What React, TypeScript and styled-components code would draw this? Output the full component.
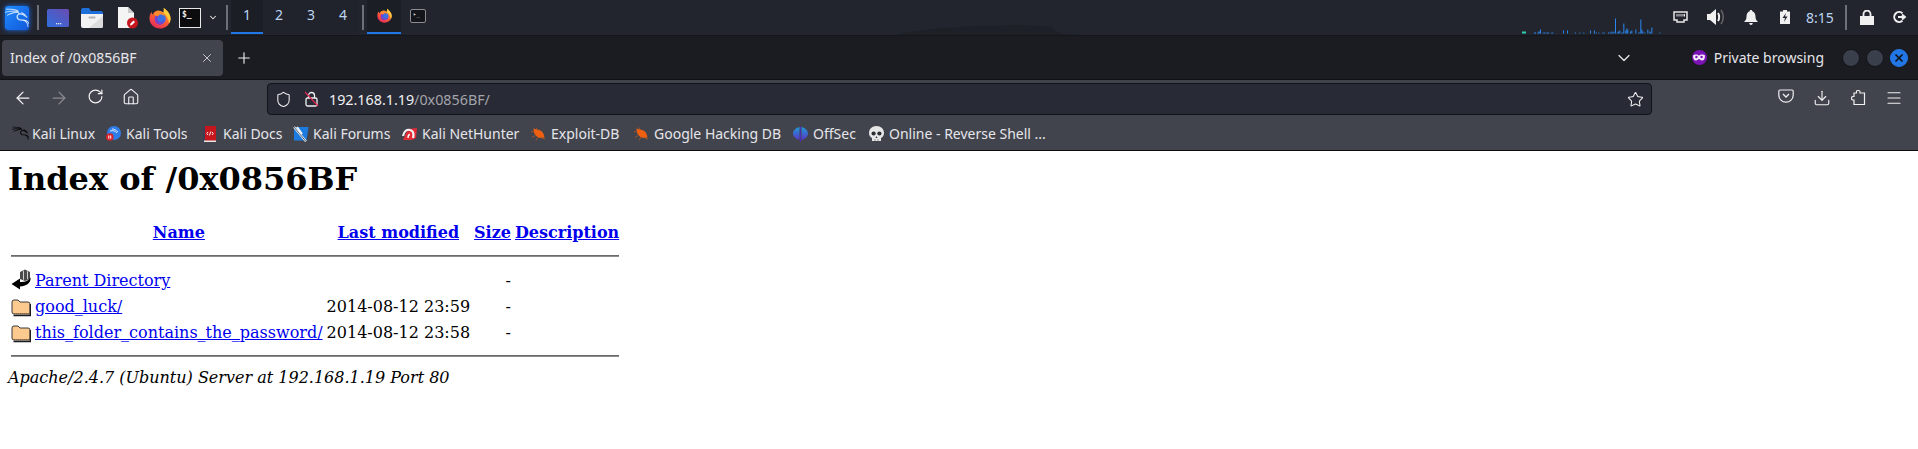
import React from "react";
import styled, { createGlobalStyle } from "styled-components";
import { SiKalilinux } from "react-icons/si";
import { ArrowLeft, ArrowRight, RotateCw, Home, Shield, Star, Download, Menu, X, Plus, ChevronDown } from "lucide-react";

const GlobalStyle = createGlobalStyle`
  html, body {
    margin: 0;
    padding: 0;
    background: #fff;
    overflow: hidden;
  }
  body {
    font-family: "DejaVu Serif", serif;
    font-size: 16px;
    color: #000;
  }
`;

const netBars: [number, number][] = [
  [102, 1], [105, 1], [112, 1], [115, 2], [118, 2], [120, 4], [128, 1], [132, 1], [137, 1], [141, 1], [145, 1], [154, 1], [157, 1],
  [189, 3], [201, 3], [225, 1], [238, 1], [250, 1], [270, 3], [282, 3], [287, 1], [295, 1], [307, 1], [311, 1], [324, 1], [328, 1],
  [332, 2], [336, 1], [340, 2], [345, 15], [350, 1], [354, 2], [358, 3], [364, 1], [367, 1], [370, 10], [376, 3], [379, 5], [382, 4],
  [390, 2], [394, 3], [406, 4], [415, 1], [418, 1], [421, 14], [424, 4], [427, 2], [433, 1], [442, 4], [448, 2], [451, 1], [454, 6], [478, 1],
];

const rows = [
  { icon: "back", name: "Parent Directory", date: "" },
  { icon: "folder", name: "good_luck/", date: "2014-08-12 23:59" },
  { icon: "folder", name: "this_folder_contains_the_password/", date: "2014-08-12 23:58" },
];

const FirefoxIcon = ({ size, id }: { size: number; id: string }) => (
  <svg width={size} height={size} viewBox="0 0 24 24">
    <defs>
      <linearGradient id={id + "a"} x1="0.8" y1="0" x2="0.2" y2="1">
        <stop offset="0" stopColor="#ffb52e" />
        <stop offset="0.55" stopColor="#ff5a36" />
        <stop offset="1" stopColor="#e0245e" />
      </linearGradient>
    </defs>
    <path d="M16 1c4 2.500 7.500 7 7.500 11.500C23.500 19 18 23.500 12 23.500 5.500 23.500 .5 18.500 .5 12.500c0-2.500.8-5 2.200-7 .2 1.300.7 2.200 1.500 2.900C5.500 5 8.500 3.500 11.500 4c2 .3 3.500 1.200 4.500 2.500.6-2 .6-3.800 0-5.500z" fill={`url(#${id}a)`} />
    <path d="M16 1c4 2.500 7.500 7 7.500 11.500 0 2-.5 3.700-1.400 5.300-1-5-3-9.500-6.600-11.300.6-2 .6-3.800.5-5.500z" fill="#ffcb3d" />
    <circle cx="12.300" cy="13" r="6" fill="#3b6fe4" />
    <path d="M6.300 13c0-2 1-3.800 2.500-4.900L12 10.200c-1.800.2-3 1.300-3 2.800 0 2 1.700 3.400 3.500 3.400 2 0 3.500-1 4.600-2.600-.6 3-2.900 5.200-5.300 5.200-3.300 0-5.500-2.700-5.500-6z" fill="#7b3fc9" />
    <path d="M5 7.500C7 4.800 10.500 4 13.200 5.400c2.300 1.100 3.500 3.300 3.600 5.100-1.400-1.800-3-2.400-5.300-2.200-.4 1-1.500 1.800-2.500 2-1.200-1-2.800-1.700-4-2.800z" fill="#ff8a2b" />
  </svg>
);

const DesktopIcon = () => (
  <svg width="22" height="18" viewBox="0 0 22 18">
    <defs>
      <linearGradient id="desk" x1="0" y1="1" x2="1" y2="0">
        <stop offset="0" stopColor="#2f6fdf" />
        <stop offset="1" stopColor="#6a4bb0" />
      </linearGradient>
    </defs>
    <rect width="22" height="18" rx="1.500" fill="url(#desk)" />
    <rect x="9" y="14" width="1.300" height="1.300" fill="#dfe6f5" />
    <rect x="11" y="14" width="1.300" height="1.300" fill="#dfe6f5" />
    <rect x="13" y="14" width="1.300" height="1.300" fill="#dfe6f5" />
  </svg>
);

const FolderIcon = () => (
  <svg width="22" height="20" viewBox="0 0 22 20">
    <path d="M0 2a2 2 0 0 1 2-2h6l2 3h10a2 2 0 0 1 2 2v2H0z" fill="#1f6fd8" />
    <path d="M0 6h22v12a2 2 0 0 1-2 2H2a2 2 0 0 1-2-2z" fill="#f2f2f2" />
    <path d="M22 8v10a2 2 0 0 1-2 2H8z" fill="#dcdcdc" />
    <rect x="7.500" y="8.500" width="7" height="2" rx="0.800" fill="#b5b5b5" />
  </svg>
);

const FileIcon = () => (
  <svg width="22" height="22" viewBox="0 0 22 22">
    <path d="M1 0h10l6 6v15H1z" fill="#f4f4f4" />
    <path d="M11 0l6 6h-6z" fill="#c9c9c9" />
    <circle cx="15.500" cy="16" r="5.500" fill="#c4161c" />
    <path d="M13 18.500l.5-2 3-3 1.500 1.500-3 3z" fill="#fff" />
  </svg>
);

const KaliMark = ({ size, color, weight }: { size: number; color: string; weight: number }) => (
  <SiKalilinux size={size} color={color} strokeWidth={weight} />
);

const ToolsFavicon = () => (
  <svg width="15" height="15" viewBox="0 0 15 15">
    <circle cx="8" cy="7" r="7" fill="#2f7de8" />
    <path d="M4 5c3-1 5 0 7 2M6 3c2 0 4 1 6 3" stroke="#dbe9ff" strokeWidth="1" fill="none" />
    <circle cx="3.800" cy="11" r="3.800" fill="#d8232a" />
    <rect x="2.300" y="9.500" width="1" height="3.200" fill="#fff" />
    <rect x="4.200" y="9.500" width="1" height="3.200" fill="#fff" />
  </svg>
);

const DocsFavicon = () => (
  <svg width="13" height="16" viewBox="0 0 13 16">
    <rect width="13" height="15" fill="#c4161c" />
    <rect width="2" height="16" fill="#3a3f55" />
    <rect x="1" y="14.500" width="12" height="1.500" fill="#e8e8e8" />
    <path d="M5 6L3.800 7.500 5 9M9 6l1.200 1.500L9 9M7.800 5.500L6.400 9.500" stroke="#fff" strokeWidth="0.900" fill="none" />
  </svg>
);

const ForumsFavicon = () => (
  <svg width="16" height="16" viewBox="0 0 16 16">
    <path d="M1 1h14.500l-2 13.500H1z" fill="#1d7be0" />
    <path d="M1 1l12 14.500M4 1l5 7" stroke="#eef4fb" strokeWidth="2" fill="none" />
    <path d="M1 1l12 14.500" stroke="#20242c" strokeWidth="0.700" fill="none" />
  </svg>
);

const HunterFavicon = () => (
  <svg width="16" height="15" viewBox="0 0 16 15">
    <path d="M1 14L6 3l9-1-1 10-4 2z" fill="#e02b35" />
    <path d="M1 10c1-5 4-7 7-6 3 .8 4 4 3 8" stroke="#f3f3f3" strokeWidth="2.200" fill="none" />
    <path d="M6 12c0-2 1-3.500 2-3.500" stroke="#f3f3f3" strokeWidth="1.500" fill="none" />
  </svg>
);

const BugFavicon = () => (
  <svg width="15" height="14" viewBox="0 0 15 14">
    <path d="M2.500 1.500l3.500 1c4 .2 7 3 7.500 8-4 1.200-8 0-9.700-3.300C2.800 5.500 2.500 3.500 2.500 1.500z" fill="#ee5f10" />
    <path d="M4 8.500L1 10.500M7 10l-2 3.500M10 10.500L14 12M2.500 5L0 4.500M6 2.500L5 .5" stroke="#a9552a" strokeWidth="0.900" />
  </svg>
);

const OffSecFavicon = () => (
  <svg width="15" height="16" viewBox="0 0 15 16">
    <defs>
      <linearGradient id="offsec" x1="0" y1="0" x2="0" y2="1">
        <stop offset="0" stopColor="#1f9ad6" />
        <stop offset="1" stopColor="#5a35c8" />
      </linearGradient>
    </defs>
    <path d="M6.500 1C2.500 2 0 4.500 0 7.500S2.500 13 6.500 14zM8.500 1c4 1 6.500 3.500 6.500 6.500S12.500 13 8.500 14z" fill="url(#offsec)" />
    <rect x="7" y="0" width="1" height="16" fill="#4a2fb5" />
  </svg>
);

const SkullFavicon = () => (
  <svg width="15" height="16" viewBox="0 0 15 16">
    <path d="M7.500 0C3 0 0 3 0 7c0 2.500 1.200 4 3 5v3h9v-3c1.800-1 3-2.500 3-5 0-4-3-7-7.500-7z" fill="#e6e6e6" />
    <circle cx="4.600" cy="7.500" r="2.100" fill="#2b2d33" />
    <circle cx="10.400" cy="7.500" r="2.100" fill="#2b2d33" />
    <path d="M7.500 10l-1 2h2z" fill="#2b2d33" />
    <path d="M6 13v2M9 13v2" stroke="#777" strokeWidth="0.700" />
  </svg>
);

const bookmarks = [
  { icon: <KaliMark size={17} color="#050505" weight={0.5} />, label: "Kali Linux", w: 94 },
  { icon: <ToolsFavicon />, label: "Kali Tools", w: 97 },
  { icon: <DocsFavicon />, label: "Kali Docs", w: 90 },
  { icon: <ForumsFavicon />, label: "Kali Forums", w: 109 },
  { icon: <HunterFavicon />, label: "Kali NetHunter", w: 129 },
  { icon: <BugFavicon />, label: "Exploit-DB", w: 103 },
  { icon: <BugFavicon />, label: "Google Hacking DB", w: 159 },
  { icon: <OffSecFavicon />, label: "OffSec", w: 76 },
  { icon: <SkullFavicon />, label: "Online - Reverse Shell ...", w: 190 },
];

export default function App() {
  return (
    <>
      <GlobalStyle />
      <Chrome>
        <TaskBar>
          <Slot $w={34}>
            <KaliButton>
              <KaliMark size={24} color="#eaf3ff" weight={0.4} />
            </KaliButton>
          </Slot>
          <Separator $left={3} />
          <Slot $w={38}><DesktopIcon /></Slot>
          <Slot $w={30}><FolderIcon /></Slot>
          <Slot $w={41}><FileIcon /></Slot>
          <Slot $w={24}><FirefoxIcon size={22} id="fa" /></Slot>
          <Slot $w={36}><TerminalBox>$_</TerminalBox></Slot>
          <Slot $w={10}><ChevronDown size={15} color="#e8e8e8" strokeWidth={2.500} /></Slot>
          <Separator $left={8} />
          <Spacer3 />
          {[1, 2, 3, 4].map((n) => (
            <Workspace key={n} $active={n === 1}>{n}</Workspace>
          ))}
          <Separator $left={3} />
          <Spacer3 />
          <TaskButton $active>
            <FirefoxIcon size={15} id="fb" />
          </TaskButton>
          <TaskButton>
            <TerminalTask>▸_</TerminalTask>
          </TaskButton>
          <Grow>
            <svg width="185" height="12" viewBox="0 0 185 12">
              <path d="M0 12C30 5 70 3 125 2c10 0 22 1 32 2 3 3 6 6 12 7l16 1z" fill="#1e2027" />
            </svg>
          </Grow>
          <NetGraph>
            <svg width="146" height="20" viewBox="0 0 146 20">
              <rect x="2" y="17.500" width="4" height="2" fill="#2fd0b0" />
              {netBars.map(([x, h]) => (
                <rect key={x} x={x / 3 - 20} y={19.500 - h} width="1" height={h} fill="#2a86f0" />
              ))}
            </svg>
          </NetGraph>
          <TrayIcon $w={28}>
            <svg width="15" height="13" viewBox="0 0 15 13">
              <path d="M1 1h13v8h-3v2H4V9H1z" fill="none" stroke="#e8e8e8" strokeWidth="1.500" />
              <path d="M4 3v2.500M6 3v2.500M8 3v2.500M10 3v2.500M11.500 3v2.500" stroke="#e8e8e8" strokeWidth="1" />
            </svg>
          </TrayIcon>
          <TrayIcon $w={44}>
            <svg width="18" height="16" viewBox="0 0 18 16">
              <path d="M0 5h3l6-5v16l-6-5H0z" fill="#f0f0f0" />
              <path d="M11 4c1.500 2 1.500 6 0 8" stroke="#f0f0f0" strokeWidth="2" fill="none" />
              <path d="M14 1c3 4 3 10 0 14" stroke="#666" strokeWidth="1.500" fill="none" />
            </svg>
          </TrayIcon>
          <TrayIcon $w={26}>
            <svg width="14" height="15" viewBox="0 0 14 15">
              <path d="M7 0c.8 0 1.300.5 1.300 1.200C10.500 2 11.500 4 11.500 6.500c0 2.500.7 3.800 2.500 5.500H0c1.800-1.700 2.500-3 2.500-5.500C2.500 4 3.500 2 5.700 1.200 5.700.5 6.200 0 7 0zM5.200 13h3.600C8.600 14.200 8 15 7 15s-1.600-.8-1.800-2z" fill="#f0f0f0" />
            </svg>
          </TrayIcon>
          <TrayIcon $w={42}>
            <svg width="10" height="14" viewBox="0 0 10 14">
              <path d="M3 0h4v1.500h3V14H0V1.500h3z" fill="#f0f0f0" />
              <path d="M6 3L2.500 8H5l-1 4 3.500-5.500H5z" fill="#22252e" />
            </svg>
          </TrayIcon>
          <Clock>8:15</Clock>
          <Separator $left={12} />
          <TrayIcon $w={40}>
            <svg width="14" height="15" viewBox="0 0 14 15">
              <path d="M0 6h14v9H0z" fill="#f0f0f0" />
              <path d="M3.500 6V4a3.500 3.500 0 0 1 7 0v2" stroke="#f0f0f0" strokeWidth="1.800" fill="none" />
            </svg>
          </TrayIcon>
          <TrayIcon $w={26}>
            <svg width="14" height="12" viewBox="0 0 14 12">
              <path d="M9.500 2.200A5 5 0 1 0 9.500 9.800" stroke="#f0f0f0" strokeWidth="2" fill="none" />
              <path d="M5 6h6M9 3.500L12 6 9 8.500" stroke="#f0f0f0" strokeWidth="1.800" fill="none" />
            </svg>
          </TrayIcon>
        </TaskBar>

        <TabStrip>
          <Tab>
            <TabTitle>Index of /0x0856BF</TabTitle>
            <X size={14} color="#d8d8dc" strokeWidth={1.500} />
          </Tab>
          <NewTab><Plus size={18} color="#f0f0f0" strokeWidth={1.500} /></NewTab>
          <TabSpacer />
          <ChevronDown size={20} color="#e6e6e6" strokeWidth={1.500} />
          <PrivateBadge>
            <PrivateIcon>
              <svg width="12" height="7" viewBox="0 0 12 7">
                <path d="M0 1.500C2-.3 4.500.5 6 1.500 7.500.5 10-.3 12 1.500c0 3-1 5-3 5-1.500 0-2-1.500-3-1.500s-1.500 1.500-3 1.500c-2 0-3-2-3-5z" fill="#f5ecff" />
                <circle cx="3.400" cy="3" r="1.200" fill="#7b12b5" />
                <circle cx="8.600" cy="3" r="1.200" fill="#7b12b5" />
              </svg>
            </PrivateIcon>
            Private browsing
          </PrivateBadge>
          <WindowButtons>
            <WindowDot />
            <WindowDot />
            <WindowDot $close><X size={12} color="#10131a" strokeWidth={3.500} /></WindowDot>
          </WindowButtons>
        </TabStrip>

        <NavBar>
          <NavButtons>
            <NavSlot><ArrowLeft size={20} color="#f3f3f5" strokeWidth={1.500} /></NavSlot>
            <NavSlot><ArrowRight size={20} color="#8a8b90" strokeWidth={1.500} /></NavSlot>
            <NavSlot><RotateCw size={17} color="#f3f3f5" strokeWidth={1.700} /></NavSlot>
            <NavSlot><Home size={18} color="#f3f3f5" strokeWidth={1.500} /></NavSlot>
          </NavButtons>
          <UrlBar>
            <Shield size={17} color="#f0f0f2" strokeWidth={1.500} />
            <LockSlot>
              <svg width="15" height="16" viewBox="0 0 15 16">
                <rect x="2" y="7" width="11" height="8" rx="1.500" fill="none" stroke="#f0f0f2" strokeWidth="1.300" />
                <path d="M4.500 7V4.500a3 3 0 0 1 6 0V7" fill="none" stroke="#f0f0f2" strokeWidth="1.300" />
                <path d="M1 1l13 14" stroke="#e22850" strokeWidth="1.200" />
              </svg>
            </LockSlot>
            <UrlText>192.168.1.19<UrlPath>/0x0856BF/</UrlPath></UrlText>
            <Star size={17} color="#f0f0f2" strokeWidth={1.500} />
          </UrlBar>
          <NavTools>
            <ToolSlot>
              <svg width="16" height="14" viewBox="0 0 16 14">
                <path d="M2 1h12a1.200 1.200 0 0 1 1.200 1.200V6A7.200 7.200 0 0 1 .8 6V2.200A1.200 1.200 0 0 1 2 1z" fill="none" stroke="#f0f0f2" strokeWidth="1.200" />
                <path d="M5 5l3 3 3-3" fill="none" stroke="#f0f0f2" strokeWidth="1.300" />
              </svg>
            </ToolSlot>
            <ToolSlot><Download size={18} color="#f0f0f2" strokeWidth={1.500} /></ToolSlot>
            <ToolSlot>
              <svg width="15" height="16" viewBox="0 0 15 16">
                <path d="M6 1.500h1.500c1 0 1.500.7 1.500 1.500v1h4.500v11.500H3V11H2c-1 0-1.500-.8-1.500-1.700S1 7.500 2 7.500h1V4h2.500V3c0-.8 0-1.500.5-1.500z" fill="none" stroke="#f0f0f2" strokeWidth="1.200" />
              </svg>
            </ToolSlot>
            <ToolSlot><Menu size={18} color="#f0f0f2" strokeWidth={1.500} /></ToolSlot>
          </NavTools>
        </NavBar>

        <BookmarkBar>
          {bookmarks.map((b) => (
            <Bookmark key={b.label} $w={b.w}>
              <BookmarkIcon>{b.icon}</BookmarkIcon>
              <span>{b.label}</span>
            </Bookmark>
          ))}
        </BookmarkBar>
      </Chrome>

      <Page>
        <Heading>Index of /0x0856BF</Heading>
        <table>
          <tbody>
            <tr>
              <th><Blank /></th>
              <th><a href="#">Name</a></th>
              <th><a href="#">Last modified</a></th>
              <th><a href="#">Size</a></th>
              <th><a href="#">Description</a></th>
            </tr>
            <tr><th colSpan={5}><Rule /></th></tr>
            {rows.map((r) => (
              <tr key={r.name}>
                <IconCell>
                  {r.icon === "back" ? (
                    <svg width="20" height="22" viewBox="0 0 20 22">
                      <path d="M9 3l5-2.500 5 2.500v7l-5 2-5-2z" fill="#4a4a4a" />
                      <path d="M12 2l1-.5v9.500l-1-.5zM16 2l1 .5v7.500l-1 .5z" fill="#d0d0d0" />
                      <path d="M19.500 8.500c.8 5-4 9-10.500 9V20.500L.5 15 9 9.500v3.500c5 .5 9-1.500 10.500-4.500z" fill="#000" />
                    </svg>
                  ) : (
                    <svg width="20" height="22" viewBox="0 0 20 22">
                      <path d="M1 7a2 2 0 0 1 2-2h4l2 2h8a2 2 0 0 1 2 2v10H3a2 2 0 0 1-2-2z" fill="#fcc98f" stroke="#3a3a3a" strokeWidth="1" />
                      <path d="M2.500 20.500h17V9" fill="none" stroke="#1c1c1c" strokeWidth="1.500" />
                      <path d="M3 18.500h15" stroke="#8f5f2c" strokeWidth="1" strokeDasharray="1 1" />
                    </svg>
                  )}
                </IconCell>
                <td><a href="#">{r.name}</a></td>
                <RightCell>{r.date}</RightCell>
                <RightCell>-</RightCell>
                <td />
              </tr>
            ))}
            <tr><th colSpan={5}><Rule /></th></tr>
          </tbody>
        </table>
        <Footer>Apache/2.4.7 (Ubuntu) Server at 192.168.1.19 Port 80</Footer>
      </Page>
    </>
  );
}

const Chrome = styled.div`
  font-family: "Noto Sans", sans-serif;
  border-bottom: 1px solid #0c0c0d;
`;

const TaskBar = styled.div`
  display: flex;
  align-items: center;
  height: 35px;
  padding-right: 5px;
  background: #22252e;
  border-bottom: 1px solid #15161a;
`;

const Slot = styled.div<{ $w: number }>`
  display: flex;
  align-items: center;
  justify-content: center;
  flex: none;
  width: ${(p) => p.$w}px;
  height: 35px;
`;

const KaliButton = styled.div`
  display: flex;
  align-items: center;
  justify-content: center;
  width: 24px;
  height: 24px;
  border-radius: 3px;
  background: linear-gradient(135deg, #1f8bff, #1258d8);
  box-shadow: 0 0 5px #1a6ef0;
`;

const Separator = styled.div<{ $left: number }>`
  flex: none;
  width: 2px;
  height: 25px;
  margin-left: ${(p) => p.$left}px;
  background: #6d7076;
`;

const Spacer3 = styled.div`
  flex: none;
  width: 3px;
`;

const TerminalBox = styled.div`
  box-sizing: border-box;
  width: 22px;
  height: 20px;
  padding: 1px 0 0 2px;
  border: 1px solid #e8e8e8;
  background: #0c0c0e;
  color: #f0f0f0;
  font: 700 8px/10px "DejaVu Sans Mono", monospace;
`;

const Workspace = styled.div<{ $active?: boolean }>`
  flex: none;
  box-sizing: border-box;
  width: 32px;
  height: 34px;
  padding-bottom: 3px;
  display: flex;
  align-items: center;
  justify-content: center;
  font-size: 14px;
  color: #bcd4f0;
  background: ${(p) => (p.$active ? "#1c1e26" : "#20232b")};
  border-bottom: 2px solid ${(p) => (p.$active ? "#2277e6" : "transparent")};
  align-self: flex-start;
`;

const TaskButton = styled.div<{ $active?: boolean }>`
  flex: none;
  box-sizing: border-box;
  width: 34px;
  height: 34px;
  padding-bottom: 1px;
  display: flex;
  align-items: center;
  justify-content: center;
  background: ${(p) => (p.$active ? "#1c1e26" : "transparent")};
  border-bottom: 2px solid ${(p) => (p.$active ? "#2277e6" : "transparent")};
  align-self: flex-start;
`;

const TerminalTask = styled.div`
  box-sizing: border-box;
  width: 16px;
  height: 14px;
  padding-left: 2px;
  border: 1px solid #8b8d92;
  border-radius: 2px;
  background: #14151a;
  color: #c8c8c8;
  font: 6px/8px "DejaVu Sans Mono", monospace;
`;

const Grow = styled.div`
  flex: 1;
  height: 35px;
  display: flex;
  align-items: flex-end;
  justify-content: flex-end;
  padding-right: 440px;
  line-height: 0;
  overflow: hidden;
`;

const NetGraph = styled.div`
  flex: none;
  width: 146px;
  height: 34px;
  display: flex;
  align-items: flex-end;
  line-height: 0;
  align-self: flex-start;
`;

const TrayIcon = styled.div<{ $w: number }>`
  flex: none;
  width: ${(p) => p.$w}px;
  display: flex;
  align-items: center;
  justify-content: center;
  margin-top: -1px;
`;

const Clock = styled.div`
  flex: none;
  width: 27px;
  font-size: 14px;
  color: #bcd4f0;
`;

const TabStrip = styled.div`
  display: flex;
  align-items: center;
  height: 43px;
  background: #1b1c21;
  padding-left: 2px;
`;

const Tab = styled.div`
  flex: none;
  box-sizing: border-box;
  display: flex;
  align-items: center;
  justify-content: space-between;
  width: 221px;
  height: 36px;
  padding: 0 9px 0 8px;
  background: #42444d;
  border-radius: 4px;
`;

const TabTitle = styled.span`
  font-size: 14px;
  color: #e6e6ea;
`;

const NewTab = styled.div`
  flex: none;
  width: 42px;
  display: flex;
  justify-content: center;
`;

const TabSpacer = styled.div`
  flex: 1;
`;

const PrivateBadge = styled.div`
  flex: none;
  display: flex;
  align-items: center;
  margin-left: 58px;
  font-size: 14px;
  color: #e6e6ea;
`;

const PrivateIcon = styled.div`
  width: 15px;
  height: 15px;
  margin-right: 7px;
  border-radius: 50%;
  background: #7b12b5;
  display: flex;
  align-items: center;
  justify-content: center;
`;

const WindowButtons = styled.div`
  flex: none;
  display: flex;
  gap: 6px;
  margin: 0 10px 0 18px;
`;

const WindowDot = styled.div<{ $close?: boolean }>`
  box-sizing: border-box;
  width: 18px;
  height: 18px;
  border-radius: 50%;
  display: flex;
  align-items: center;
  justify-content: center;
  background: ${(p) => (p.$close ? "#2277e6" : "#3a3f4c")};
  border: 1px solid ${(p) => (p.$close ? "#2277e6" : "#14151a")};
`;

const NavBar = styled.div`
  display: flex;
  align-items: center;
  height: 36px;
  background: #42444d;
  border-top: 1px solid #101114;
  box-sizing: border-box;
`;

const NavButtons = styled.div`
  flex: none;
  display: flex;
  width: 267px;
  padding-left: 5px;
  box-sizing: border-box;
`;

const NavSlot = styled.div`
  width: 36px;
  display: flex;
  justify-content: center;
`;

const UrlBar = styled.div`
  flex: none;
  box-sizing: border-box;
  width: 1385px;
  height: 32px;
  margin-top: 3px;
  padding: 0 7px 0 7px;
  display: flex;
  align-items: center;
  background: #282a35;
  border: 1px solid #121318;
  border-radius: 4px;
`;

const LockSlot = styled.div`
  flex: none;
  margin-left: 12px;
  width: 15px;
  line-height: 0;
`;

const UrlText = styled.div`
  flex: 1;
  margin-left: 10px;
  font-size: 14.300px;
  color: #f0f0f2;
`;

const UrlPath = styled.span`
  color: #a4a5aa;
`;

const NavTools = styled.div`
  flex: 1;
  display: flex;
  padding-left: 116px;
`;

const ToolSlot = styled.div`
  width: 36px;
  flex: none;
  display: flex;
  justify-content: center;
`;

const BookmarkBar = styled.div`
  display: flex;
  align-items: center;
  box-sizing: border-box;
  height: 35px;
  padding: 2px 0 0 12px;
  background: #42444d;
`;

const Bookmark = styled.div<{ $w: number }>`
  flex: none;
  width: ${(p) => p.$w}px;
  display: flex;
  align-items: center;
  font-size: 14px;
  color: #e6e6ea;
  white-space: nowrap;
`;

const BookmarkIcon = styled.div`
  flex: none;
  width: 20px;
  display: flex;
  line-height: 0;
`;

const Page = styled.main`
  padding: 8px;
`;

const Heading = styled.h1`
  margin: 0 0 20.440px;
  padding-top: 1px;
  font-size: 32px;
  font-weight: 700;
`;

const Blank = styled.span`
  display: block;
  width: 20px;
  height: 22px;
`;

const Rule = styled.hr`
  height: 0;
  margin: 8px 0;
  border: 0;
  border-top: 1px solid #6a6a6a;
  border-bottom: 1px solid #8c8c8c;
`;

const IconCell = styled.td`
  vertical-align: top;
  line-height: 0;

  svg {
    display: block;
  }
`;

const RightCell = styled.td`
  text-align: right;
`;

const Footer = styled.address`
  font-style: italic;
`;
